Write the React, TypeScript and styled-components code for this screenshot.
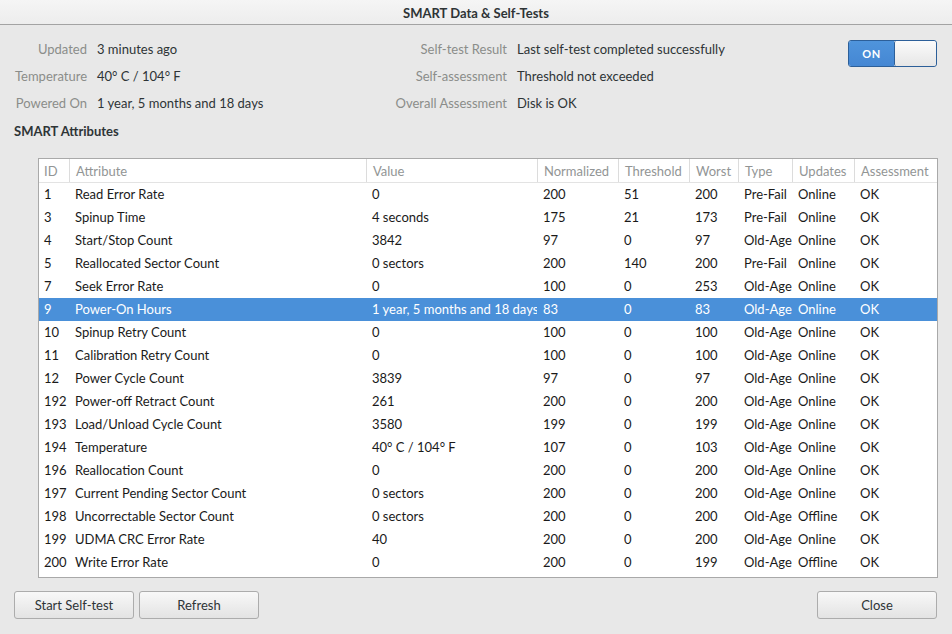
import React from "react";
import styled, { createGlobalStyle } from "styled-components";

const Global = createGlobalStyle`
  html, body { margin: 0; padding: 0; }
  body {
    background: #e8e8e8;
    font-family: Lato, "Open Sans", sans-serif;
    font-size: 13px;
    color: #2e3436;
  }
`;

const Window = styled.div`
  width: 952px;
  height: 634px;
  display: flex;
  flex-direction: column;
  background: #e8e8e8;
  box-sizing: border-box;
`;

const TitleBar = styled.div`
  height: 25px;
  box-sizing: border-box;
  border-bottom: 1px solid #a3a3a3;
  background: linear-gradient(#f5f5f5, #ededed);
  text-align: center;
  line-height: 26px;
  font-weight: bold;
  color: #2e3436;
`;

const Body = styled.div`
  flex: 1;
  display: flex;
  flex-direction: column;
  padding: 10px 15px 15px 14px;
`;

const InfoGrid = styled.div`
  display: grid;
  grid-template-columns: 73px 193px 207px 1fr auto;
  grid-auto-rows: 27px;
  column-gap: 10px;
  align-items: center;
`;

const Label = styled.div`
  text-align: right;
  color: #8b8d8a;
  white-space: nowrap;
`;

const Value = styled.div<{ $shift?: number }>`
  color: #2e3436;
  white-space: nowrap;
  margin-left: ${(p) => p.$shift ?? 0}px;
`;

const Switch = styled.div`
  grid-column: 5;
  grid-row: 1 / span 2;
  align-self: start;
  margin-top: 5px;
  width: 89px;
  height: 27px;
  box-sizing: border-box;
  border: 1px solid #2c5f99;
  border-radius: 3px;
  display: flex;
  overflow: hidden;
`;

const SwitchOn = styled.div`
  width: 45px;
  background: linear-gradient(#4f94dc, #4587d3);
  color: #fff;
  font-size: 11px;
  font-weight: bold;
  letter-spacing: 0.5px;
  display: flex;
  align-items: center;
  justify-content: center;
`;

const SwitchKnob = styled.div`
  flex: 1;
  border-left: 1px solid #2c5f99;
  border-radius: 2px;
  background: linear-gradient(#fbfbfb, #e6e6e6);
`;

const SectionTitle = styled.div`
  margin-top: 6px;
  line-height: 18px;
  font-weight: bold;
  color: #2e3436;
`;

const Table = styled.div`
  margin-top: 18px;
  margin-left: 24px;
  width: 900px;
  height: 420px;
  box-sizing: border-box;
  border: 1px solid #a9a9a9;
  background: #fff;
  overflow: hidden;
`;

const COLS = "30px 297px 171px 81px 71px 49px 54px 62px 1fr";

const HeaderRow = styled.div`
  display: grid;
  grid-template-columns: ${COLS};
  height: 24px;
  box-sizing: border-box;
  border-bottom: 1px solid #e3e3e3;
`;

const HeaderCell = styled.div<{ $first?: boolean }>`
  border-left: ${(p) => (p.$first ? "none" : "1px solid #dcdcdc")};
  padding-left: ${(p) => (p.$first ? 5 : 6)}px;
  line-height: 24px;
  color: #929595;
  white-space: nowrap;
  overflow: hidden;
`;

const Row = styled.div<{ $selected?: boolean }>`
  display: grid;
  grid-template-columns: ${COLS};
  height: 23px;
  line-height: 23px;
  background: ${(p) => (p.$selected ? "#4a90d9" : "transparent")};
  color: ${(p) => (p.$selected ? "#ffffff" : "#1a1a1a")};
`;

const Cell = styled.div<{ $first?: boolean }>`
  padding-left: ${(p) => (p.$first ? 5 : 6)}px;
  white-space: nowrap;
  overflow: hidden;
`;

const ButtonRow = styled.div`
  margin-top: 13px;
  display: flex;
  gap: 5px;
`;

const Button = styled.button<{ $push?: boolean }>`
  width: 120px;
  height: 28px;
  margin-left: ${(p) => (p.$push ? "auto" : "0")};
  box-sizing: border-box;
  border: 1px solid #acacac;
  border-radius: 3px;
  background: linear-gradient(#f8f8f8, #e3e3e3);
  font-family: Lato, "Open Sans", sans-serif;
  font-size: 13px;
  color: #2e3436;
  padding: 0;
`;

const headers = [
  "ID",
  "Attribute",
  "Value",
  "Normalized",
  "Threshold",
  "Worst",
  "Type",
  "Updates",
  "Assessment",
];

const rows: string[][] = [
  ["1", "Read Error Rate", "0", "200", "51", "200", "Pre-Fail", "Online", "OK"],
  ["3", "Spinup Time", "4 seconds", "175", "21", "173", "Pre-Fail", "Online", "OK"],
  ["4", "Start/Stop Count", "3842", "97", "0", "97", "Old-Age", "Online", "OK"],
  ["5", "Reallocated Sector Count", "0 sectors", "200", "140", "200", "Pre-Fail", "Online", "OK"],
  ["7", "Seek Error Rate", "0", "100", "0", "253", "Old-Age", "Online", "OK"],
  ["9", "Power-On Hours", "1 year, 5 months and 18 days", "83", "0", "83", "Old-Age", "Online", "OK"],
  ["10", "Spinup Retry Count", "0", "100", "0", "100", "Old-Age", "Online", "OK"],
  ["11", "Calibration Retry Count", "0", "100", "0", "100", "Old-Age", "Online", "OK"],
  ["12", "Power Cycle Count", "3839", "97", "0", "97", "Old-Age", "Online", "OK"],
  ["192", "Power-off Retract Count", "261", "200", "0", "200", "Old-Age", "Online", "OK"],
  ["193", "Load/Unload Cycle Count", "3580", "199", "0", "199", "Old-Age", "Online", "OK"],
  ["194", "Temperature", "40° C / 104° F", "107", "0", "103", "Old-Age", "Online", "OK"],
  ["196", "Reallocation Count", "0", "200", "0", "200", "Old-Age", "Online", "OK"],
  ["197", "Current Pending Sector Count", "0 sectors", "200", "0", "200", "Old-Age", "Online", "OK"],
  ["198", "Uncorrectable Sector Count", "0 sectors", "200", "0", "200", "Old-Age", "Offline", "OK"],
  ["199", "UDMA CRC Error Rate", "40", "200", "0", "200", "Old-Age", "Online", "OK"],
  ["200", "Write Error Rate", "0", "200", "0", "199", "Old-Age", "Offline", "OK"],
];

export default function App() {
  return (
    <>
      <Global />
      <Window>
        <TitleBar>SMART Data &amp; Self-Tests</TitleBar>
        <Body>
          <InfoGrid>
            <Label>Updated</Label>
            <Value>3 minutes ago</Value>
            <Label>Self-test Result</Label>
            <Value>Last self-test completed successfully</Value>
            <Switch>
              <SwitchOn>ON</SwitchOn>
              <SwitchKnob />
            </Switch>
            <Label>Temperature</Label>
            <Value>40° C / 104° F</Value>
            <Label>Self-assessment</Label>
            <Value>Threshold not exceeded</Value>
            <Label>Powered On</Label>
            <Value>1 year, 5 months and 18 days</Value>
            <Label>Overall Assessment</Label>
            <Value>Disk is OK</Value>
          </InfoGrid>
          <SectionTitle>SMART Attributes</SectionTitle>
          <Table>
            <HeaderRow>
              {headers.map((h, i) => (
                <HeaderCell key={h} $first={i === 0}>
                  {h}
                </HeaderCell>
              ))}
            </HeaderRow>
            {rows.map((r) => (
              <Row key={r[0]} $selected={r[0] === "9"}>
                {r.map((c, i) => (
                  <Cell key={i} $first={i === 0}>
                    {c}
                  </Cell>
                ))}
              </Row>
            ))}
          </Table>
          <ButtonRow>
            <Button>Start Self-test</Button>
            <Button>Refresh</Button>
            <Button $push>Close</Button>
          </ButtonRow>
        </Body>
      </Window>
    </>
  );
}
